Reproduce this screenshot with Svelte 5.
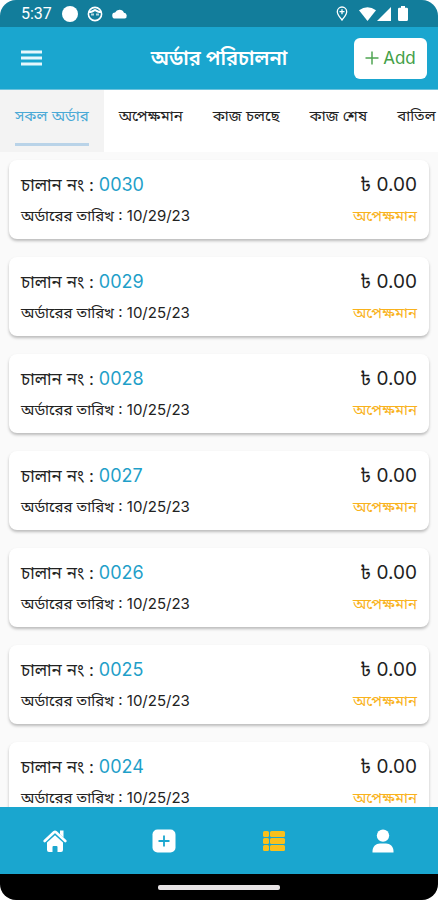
<script>
	const tabs = ['সকল অর্ডার', 'অপেক্ষমান', 'কাজ চলছে', 'কাজ শেষ', 'বাতিল'];

	const orders = [
		{ invoice: '0030', date: '10/29/23', amount: '0.00', status: 'অপেক্ষমান' },
		{ invoice: '0029', date: '10/25/23', amount: '0.00', status: 'অপেক্ষমান' },
		{ invoice: '0028', date: '10/25/23', amount: '0.00', status: 'অপেক্ষমান' },
		{ invoice: '0027', date: '10/25/23', amount: '0.00', status: 'অপেক্ষমান' },
		{ invoice: '0026', date: '10/25/23', amount: '0.00', status: 'অপেক্ষমান' },
		{ invoice: '0025', date: '10/25/23', amount: '0.00', status: 'অপেক্ষমান' },
		{ invoice: '0024', date: '10/25/23', amount: '0.00', status: 'অপেক্ষমান' }
	];

	let activeTab = $state(0);
</script>

<div class="screen">
	<div class="status-bar">
		<span class="time">5:37</span>
		<svg class="dot" width="16" height="16" viewBox="0 0 16 16"><circle cx="8" cy="8" r="8" fill="#fff" /></svg>
		<svg class="face" width="16" height="16" viewBox="0 0 16 16" fill="none" stroke="#fff">
			<circle cx="8" cy="8" r="6.6" stroke-width="1.6" />
			<path d="M2 5.5c3 1.6 5-1.5 6-1.5s3 3.1 6 1.5" stroke-width="2" />
			<path d="M4 7.5h3v2H4zM9 7.500h3v2H9z" fill="#fff" stroke="none" opacity="0.7" />
		</svg>
		<svg class="cloud" width="16" height="10" viewBox="0 0 16 10"><path d="M3.4 9.5a3 3 0 0 1-.3-6A4.9 4.9 0 0 1 12 3.8a2.9 2.9 0 0 1 .6 5.700z" fill="#fff" /></svg>
		<span class="spacer"></span>
		<svg class="pin" width="12" height="15" viewBox="0 0 12 15" fill="none" stroke="#fff">
			<path d="M6 14C4 11.2 1.300 8.700 1.300 5.700a4.700 4.700 0 0 1 9.400 0C10.700 8.700 8 11.200 6 14z" stroke-width="1.3" />
			<path d="M6 3.200v5M3.500 5.700h5" stroke-width="1.3" />
		</svg>
		<svg class="wifi" width="17" height="14" viewBox="0 0 17 14"><path d="M0 3.300Q8.500-3 17 3.300L8.500 14z" fill="#fff" /></svg>
		<svg width="14" height="14" viewBox="0 0 14 14"><path d="M14 0v14H0z" fill="#fff" /></svg>
		<svg class="battery" width="10" height="15" viewBox="0 0 10 15"><path d="M3 0h4v1.700h1.700q1.300 0 1.300 1.300v10.500q0 1.500-1.500 1.500h-7Q0 15 0 13.500V3q0-1.300 1.300-1.300H3z" fill="#fff" /></svg>
	</div>

	<header>
		<button class="menu" aria-label="Menu">
			<svg width="21" height="16" viewBox="0 0 21 16"><path d="M0 2h21M0 8h21M0 14h21" stroke="#e6f7fc" stroke-width="3" /></svg>
		</button>
		<h1>অর্ডার পরিচালনা</h1>
		<button class="add">
			<svg width="14" height="14" viewBox="0 0 14 14"><path d="M7 .5v13M.5 7h13" stroke="#4fa552" stroke-width="1.5" /></svg>
			Add
		</button>
	</header>

	<div class="tabs" role="tablist">
		{#each tabs as tab, i}
			<button role="tab" aria-selected={activeTab === i} class:active={activeTab === i} onclick={() => (activeTab = i)}>
				<span>{tab}</span>
			</button>
		{/each}
	</div>

	<main>
		{#each orders as order}
			<article class="card">
				<div class="row top">
					<span>চালান নং : <a href="#{order.invoice}">{order.invoice}</a></span>
					<span class="amount">৳ {order.amount}</span>
				</div>
				<div class="row bottom">
					<span>অর্ডারের তারিখ : <time>{order.date}</time></span>
					<span class="status">{order.status}</span>
				</div>
			</article>
		{/each}
	</main>

	<nav>
		<button aria-label="Home">
			<svg width="24" height="24" viewBox="0 0 24 24">
				<path d="M1.700 12 11 3.300q1-.9 2 0l9.300 8.700" fill="none" stroke="#fff" stroke-width="2.6" stroke-linecap="round" />
				<path d="M17 1.500h3.500v7L17 5.300z" fill="#fff" />
				<path d="M12 6.200l8 7.400V21q0 2-2 2h-3.500v-5q0-1-1-1h-3q-1 0-1 1v5H6q-2 0-2-2v-7.400z" fill="#fff" />
			</svg>
		</button>
		<button aria-label="New order">
			<svg width="24" height="24" viewBox="0 0 24 24">
				<rect x=".5" y=".5" width="23" height="23" rx="5" fill="#fff" />
				<path d="M12 6.500v11M6.500 12h11" stroke="#1aa6cf" stroke-width="1.800" />
			</svg>
		</button>
		<button aria-label="Orders">
			<svg width="24" height="24" viewBox="0 0 24 24" fill="#f9c01c">
				<rect x="1" y="2" width="6" height="6" rx="1.500" />
				<rect x="8" y="2" width="15" height="6" rx="1.500" />
				<rect x="1" y="9" width="6" height="6" rx="1.500" />
				<rect x="8" y="9" width="15" height="6" rx="1.500" />
				<rect x="1" y="16" width="6" height="6" rx="1.500" />
				<rect x="8" y="16" width="15" height="6" rx="1.500" />
			</svg>
		</button>
		<button aria-label="Profile">
			<svg width="24" height="24" viewBox="0 0 24 24" fill="#fff">
				<circle cx="12" cy="6.600" r="6.200" />
				<path d="M1.500 23.500v-1.500C1.500 17.500 5 14.500 9 14.500h6c4 0 7.500 3 7.500 7.500v1.500z" />
			</svg>
		</button>
	</nav>

	<div class="gesture"><span></span></div>
</div>

<style>
	:global(body) {
		background: #fff;
	}

	.screen {
		display: flex;
		flex-direction: column;
		height: 100vh;
		border-radius: 16px;
		overflow: hidden;
		background: #fafafa;
		color: #222;
		font-family: Inter, 'Noto Sans Bengali', 'Noto Sans', sans-serif;
	}

	button {
		padding: 0;
		border: none;
		background: none;
		font-family: inherit;
		cursor: pointer;
	}

	svg {
		display: block;
		flex: none;
	}

	.status-bar {
		display: flex;
		align-items: center;
		flex: none;
		height: 27px;
		padding: 0 30px 0 21px;
		background: #127d9b;
		color: #fff;
	}

	.time {
		font-family: Roboto, sans-serif;
		font-size: 16px;
	}

	.dot {
		margin-left: 10px;
	}

	.face,
	.cloud {
		margin-left: 9px;
	}

	.spacer {
		flex: 1;
	}

	.pin {
		margin-right: 11px;
	}

	.wifi {
		margin-right: 1px;
	}

	.battery {
		margin-left: 7px;
	}

	header {
		display: grid;
		grid-template-columns: 73px 1fr 73px;
		align-items: center;
		flex: none;
		height: 62px;
		padding: 0 11px;
		border-bottom: 1px solid #6cc3dd;
		background: #1aa6cf;
	}

	h1 {
		margin: 0;
		color: #fff;
		font-size: 20px;
		font-weight: 600;
		line-height: 28px;
		text-align: center;
		white-space: nowrap;
	}

	.menu {
		justify-self: start;
		padding: 10px;
	}

	.add {
		display: flex;
		align-items: center;
		justify-content: center;
		gap: 4px;
		height: 41px;
		border-radius: 6px;
		background: #fff;
		color: #43a047;
		font-size: 17px;
		font-weight: 400;
	}

	.tabs {
		display: flex;
		flex: none;
		height: 62px;
		overflow: hidden;
		background: #fff;
	}

	.tabs button {
		flex: none;
		padding: 0 15px 6px;
		color: #222;
		font-size: 15px;
		line-height: 22px;
		white-space: nowrap;
	}

	.tabs span {
		display: block;
		box-sizing: border-box;
		height: 56px;
		padding-top: 15px;
		border-bottom: 3px solid transparent;
	}

	.tabs .active {
		background: #f3f3f3;
		color: #4aa9d6;
	}

	.tabs .active span {
		border-color: #b9d3e8;
	}

	main {
		display: flex;
		flex-direction: column;
		flex: 1;
		gap: 18px;
		min-height: 0;
		padding: 8px 9px 0;
		overflow: hidden;
	}

	.card {
		flex: none;
		box-sizing: border-box;
		height: 79px;
		padding: 10px 12px;
		border-radius: 8px;
		background: #fff;
		box-shadow: 0 2px 3px rgba(0, 0, 0, 0.25);
	}

	.row {
		display: flex;
		justify-content: space-between;
		white-space: nowrap;
	}

	.top {
		font-size: 17px;
		line-height: 30px;
	}

	.top a {
		color: #1f9fc9;
		font-size: 18px;
		text-decoration: none;
	}

	.amount {
		font-size: 19px;
	}

	.bottom {
		font-size: 15px;
		line-height: 32px;
	}

	.status {
		color: #f9b21c;
	}

	nav {
		display: grid;
		grid-template-columns: repeat(4, 1fr);
		flex: none;
		height: 67px;
		background: #1aa6cf;
	}

	nav button {
		display: flex;
		align-items: center;
		justify-content: center;
	}

	.gesture {
		display: flex;
		align-items: center;
		justify-content: center;
		flex: none;
		height: 26px;
		background: #000;
	}

	.gesture span {
		width: 122px;
		height: 5px;
		border-radius: 2px;
		background: #e8e4e6;
	}
</style>
